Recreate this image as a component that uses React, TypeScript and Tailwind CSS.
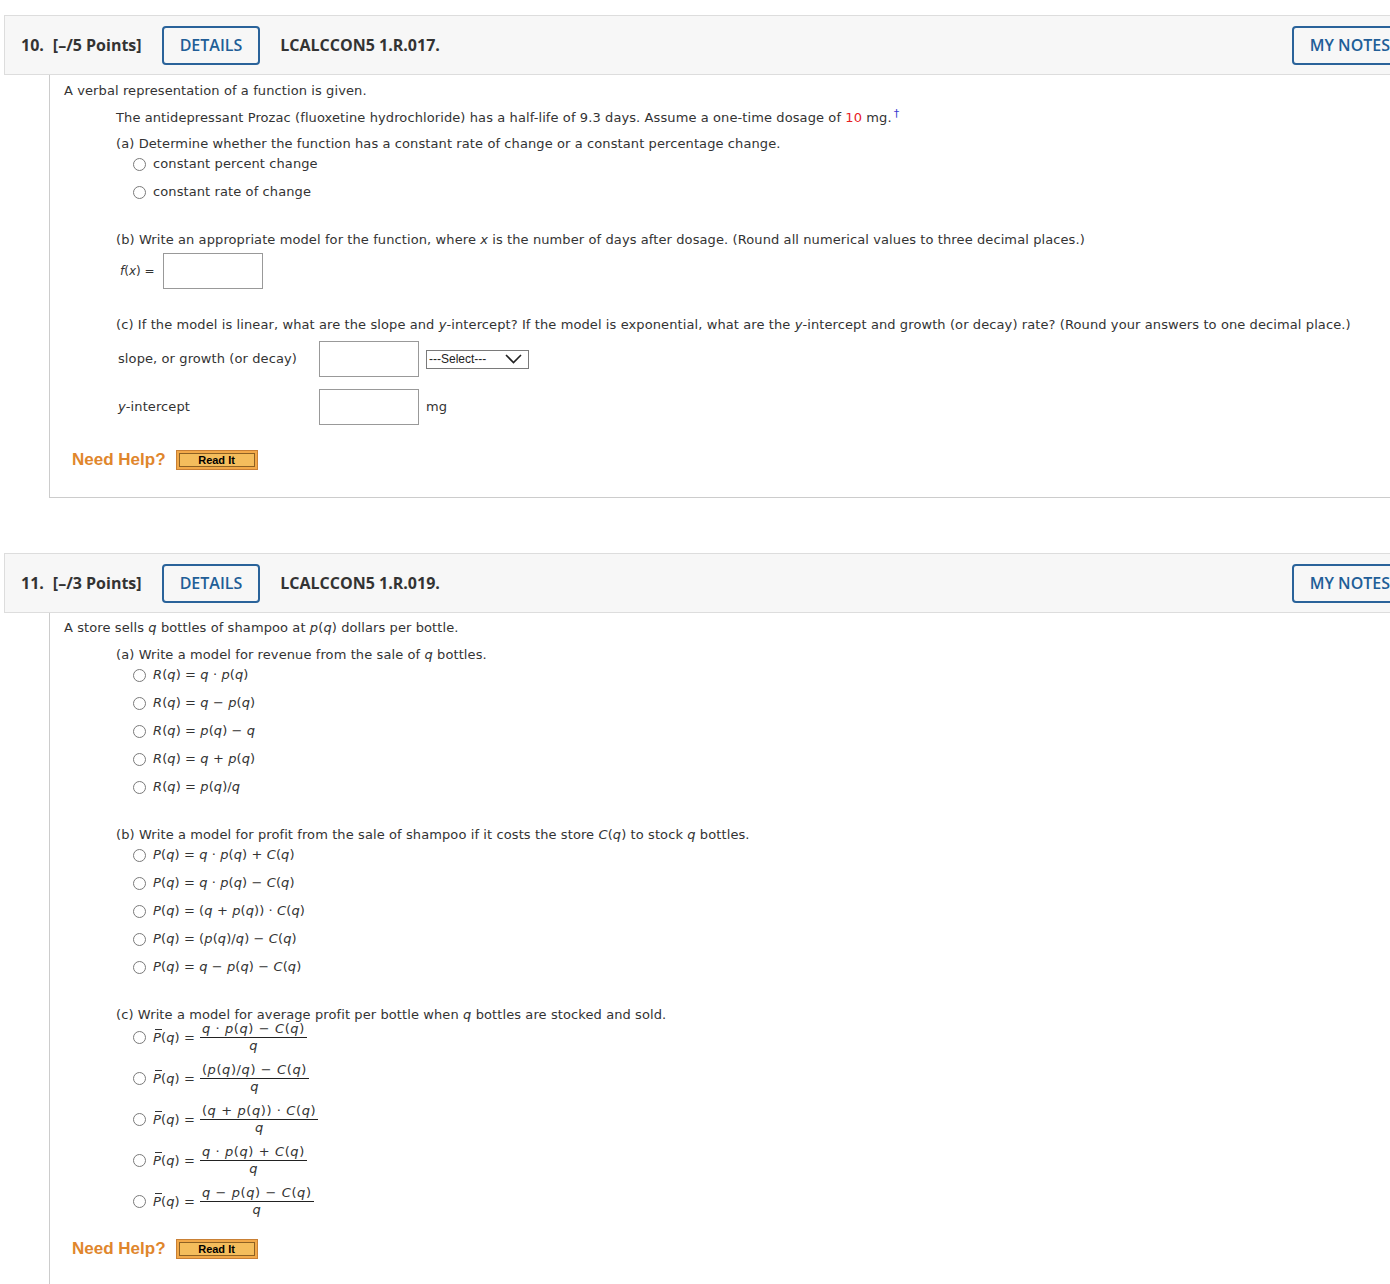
import React from 'react';

const V: React.FC<{ children: React.ReactNode }> = ({ children }) => <i>{children}</i>;

const Radio: React.FC = () => (
    <span className="inline-block w-[13px] h-[13px] rounded-full border border-[#7a7a7a] bg-white shrink-0" />
);

const Pbar: React.FC = () => (
    <span className="relative inline-block">
        <i>P</i>
        <span className="absolute left-[2px] top-[1px] w-[7px] border-t border-[#333]" />
    </span>
);

const Frac: React.FC<{ num: React.ReactNode; den: React.ReactNode }> = ({ num, den }) => (
    <span className="inline-flex flex-col items-center ml-[5px]">
        <span className="leading-[16px] px-[2px] tracking-[0.6px] border-b border-[#222]">{num}</span>
        <span className="leading-[16px]">{den}</span>
    </span>
);

const Header: React.FC<{ num: string; points: string; code: string }> = ({ num, points, code }) => (
    <div className="ml-[4px] w-[1421px] h-[60px] flex items-center bg-[#f7f7f7] border border-[#dddddd] pl-[16px] pr-[16px] font-['Open_Sans',sans-serif] text-[16px] tracking-normal font-bold text-[#333]">
        <span>{num}</span>
        <span className="ml-[9px]">{points}</span>
        <button className="ml-[20px] h-[39px] px-[16px] border-2 border-[#2a639a] rounded-[4px] text-[#215e97] font-semibold">
            DETAILS
        </button>
        <span className="ml-[20px]">{code}</span>
        <button className="ml-auto h-[39px] px-[16px] border-2 border-[#2a639a] rounded-[4px] text-[#215e97] font-semibold">
            MY NOTES
        </button>
    </div>
);

const NeedHelp: React.FC = () => (
    <div className="flex items-center h-[24px] ml-[8px] tracking-normal">
        <span className="font-['Liberation_Sans',sans-serif] font-bold text-[17px] text-[#e0862c]">Need Help?</span>
        <span className="ml-[10px] w-[82px] h-[20px] p-[2px] border border-[#c98035] bg-[#f2a949] flex">
            <span className="flex-1 border border-[#8d6124] bg-[#f4bd5c] flex items-center justify-center font-['Liberation_Sans',sans-serif] font-bold text-[11px] text-black leading-none">
                Read It
            </span>
        </span>
    </div>
);

const RadioRow: React.FC<{ children: React.ReactNode; first?: boolean }> = ({ children, first }) => (
    <div className={first ? 'flex items-center h-[20px] ml-[17px]' : 'flex items-center h-[20px] ml-[17px] mt-[8px]'}>
        <Radio />
        <span className="ml-[7px]">{children}</span>
    </div>
);

const FracRow: React.FC<{ num: React.ReactNode; first?: boolean }> = ({ num, first }) => (
    <div className={first ? 'flex items-center ml-[17px] mt-[-4px]' : 'flex items-center ml-[17px] mt-[8px]'}>
        <Radio />
        <span className="ml-[7px]">
            <Pbar />(<V>q</V>) =
        </span>
        <Frac num={num} den={<V>q</V>} />
    </div>
);

const Input: React.FC = () => <div className="w-[100px] h-[36px] border border-[#999] bg-white shrink-0" />;

export default function App() {
    return (
        <div className="w-full overflow-hidden bg-white pt-[15px] pb-[40px] font-['DejaVu_Sans',Verdana,sans-serif] text-[13px] tracking-[0.1px] text-[#333]">
            <Header num="10." points="[–/5 Points]" code="LCALCCON5 1.R.017." />
            <div className="ml-[49px] border-l border-b border-[#cccccc] pl-[14px] pt-[6px] pb-[25px] leading-[20px]">
                <p>A verbal representation of a function is given.</p>
                <div className="ml-[52px]">
                    <p className="mt-[7px]">
                        The antidepressant Prozac (fluoxetine hydrochloride) has a half-life of 9.3 days. Assume a one-time
                        dosage of <span className="text-[#e8201f]">10</span> mg.
                        <sup className="text-[#3b3bd0] text-[11px] ml-[2px]">†</sup>
                    </p>
                    <p className="mt-[6px]">
                        (a) Determine whether the function has a constant rate of change or a constant percentage change.
                    </p>
                    <RadioRow first>constant percent change</RadioRow>
                    <RadioRow>constant rate of change</RadioRow>
                    <p className="mt-[28px]">
                        (b) Write an appropriate model for the function, where <V>x</V> is the number of days after dosage.
                        (Round all numerical values to three decimal places.)
                    </p>
                    <div className="mt-[3px] flex items-center">
                        <span className="ml-[4px] text-[12px] tracking-normal">
                            <V>f</V>(<V>x</V>) =
                        </span>
                        <div className="ml-[8px]">
                            <Input />
                        </div>
                    </div>
                    <p className="mt-[26px]">
                        (c) If the model is linear, what are the slope and <V>y</V>-intercept? If the model is exponential,
                        what are the <V>y</V>-intercept and growth (or decay) rate? (Round your answers to one decimal
                        place.)
                    </p>
                    <div className="mt-[6px] flex items-center">
                        <span className="ml-[2px] w-[201px]">slope, or growth (or decay)</span>
                        <Input />
                        <span className="ml-[7px] w-[103px] h-[19px] border border-[#7a7a7a] flex items-center pl-[2px] pr-[6px] font-['Liberation_Sans',sans-serif] text-[12px] tracking-normal text-[#222]">
                            <span>---Select---</span>
                            <svg className="ml-auto" width="17" height="10" viewBox="0 0 17 10" fill="none">
                                <path d="M1 1l7.5 7.5L16 1" stroke="#222" strokeWidth="1.6" />
                            </svg>
                        </span>
                    </div>
                    <div className="mt-[12px] flex items-center">
                        <span className="ml-[2px] w-[201px]">
                            <V>y</V>-intercept
                        </span>
                        <Input />
                        <span className="ml-[7px]">mg</span>
                    </div>
                </div>
                <div className="mt-[23px]">
                    <NeedHelp />
                </div>
            </div>

            <div className="mt-[55px]">
                <Header num="11." points="[–/3 Points]" code="LCALCCON5 1.R.019." />
            </div>
            <div className="ml-[49px] border-l border-[#cccccc] pl-[14px] pt-[5px] pb-[30px] leading-[20px]">
                <p>
                    A store sells <V>q</V> bottles of shampoo at <V>p</V>(<V>q</V>) dollars per bottle.
                </p>
                <div className="ml-[52px]">
                    <p className="mt-[7px]">
                        (a) Write a model for revenue from the sale of <V>q</V> bottles.
                    </p>
                    <RadioRow first>
                        <V>R</V>(<V>q</V>) = <V>q</V> · <V>p</V>(<V>q</V>)
                    </RadioRow>
                    <RadioRow>
                        <V>R</V>(<V>q</V>) = <V>q</V> − <V>p</V>(<V>q</V>)
                    </RadioRow>
                    <RadioRow>
                        <V>R</V>(<V>q</V>) = <V>p</V>(<V>q</V>) − <V>q</V>
                    </RadioRow>
                    <RadioRow>
                        <V>R</V>(<V>q</V>) = <V>q</V> + <V>p</V>(<V>q</V>)
                    </RadioRow>
                    <RadioRow>
                        <V>R</V>(<V>q</V>) = <V>p</V>(<V>q</V>)/<V>q</V>
                    </RadioRow>

                    <p className="mt-[28px]">
                        (b) Write a model for profit from the sale of shampoo if it costs the store <V>C</V>(<V>q</V>) to
                        stock <V>q</V> bottles.
                    </p>
                    <RadioRow first>
                        <V>P</V>(<V>q</V>) = <V>q</V> · <V>p</V>(<V>q</V>) + <V>C</V>(<V>q</V>)
                    </RadioRow>
                    <RadioRow>
                        <V>P</V>(<V>q</V>) = <V>q</V> · <V>p</V>(<V>q</V>) − <V>C</V>(<V>q</V>)
                    </RadioRow>
                    <RadioRow>
                        <V>P</V>(<V>q</V>) = (<V>q</V> + <V>p</V>(<V>q</V>)) · <V>C</V>(<V>q</V>)
                    </RadioRow>
                    <RadioRow>
                        <V>P</V>(<V>q</V>) = (<V>p</V>(<V>q</V>)/<V>q</V>) − <V>C</V>(<V>q</V>)
                    </RadioRow>
                    <RadioRow>
                        <V>P</V>(<V>q</V>) = <V>q</V> − <V>p</V>(<V>q</V>) − <V>C</V>(<V>q</V>)
                    </RadioRow>

                    <p className="mt-[28px]">
                        (c) Write a model for average profit per bottle when <V>q</V> bottles are stocked and sold.
                    </p>
                    <FracRow
                        first
                        num={
                            <>
                                <V>q</V> · <V>p</V>(<V>q</V>) − <V>C</V>(<V>q</V>)
                            </>
                        }
                    />
                    <FracRow
                        num={
                            <>
                                (<V>p</V>(<V>q</V>)/<V>q</V>) − <V>C</V>(<V>q</V>)
                            </>
                        }
                    />
                    <FracRow
                        num={
                            <>
                                (<V>q</V> + <V>p</V>(<V>q</V>)) · <V>C</V>(<V>q</V>)
                            </>
                        }
                    />
                    <FracRow
                        num={
                            <>
                                <V>q</V> · <V>p</V>(<V>q</V>) + <V>C</V>(<V>q</V>)
                            </>
                        }
                    />
                    <FracRow
                        num={
                            <>
                                <V>q</V> − <V>p</V>(<V>q</V>) − <V>C</V>(<V>q</V>)
                            </>
                        }
                    />
                </div>
                <div className="mt-[19px]">
                    <NeedHelp />
                </div>
            </div>
        </div>
    );
}
